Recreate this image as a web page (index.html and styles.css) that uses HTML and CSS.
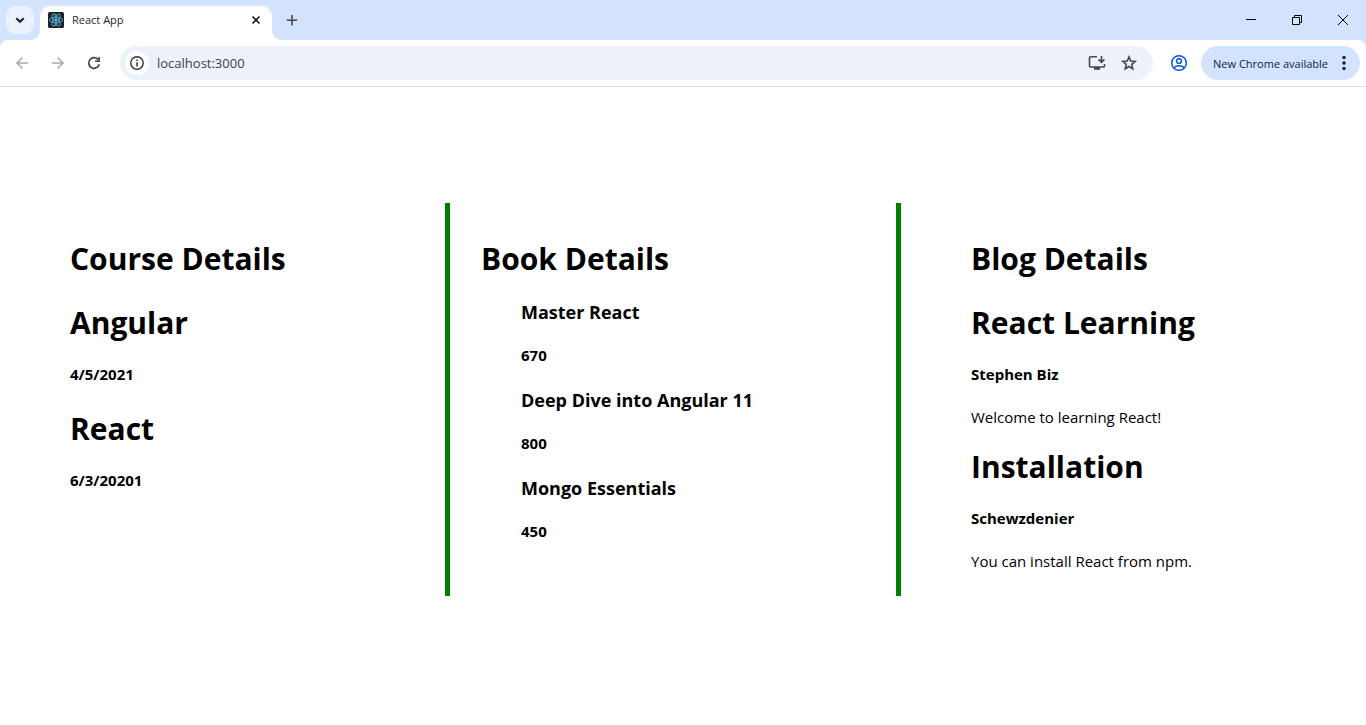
FILE: index.html
```html
<!DOCTYPE html>
<html lang="en">
<head>
<meta charset="utf-8">
<title>React App</title>
<link rel="stylesheet" href="styles.css">
</head>
<body>
<header class="browser">
  <div class="tabstrip">
    <button class="tab-search" aria-label="Search tabs">
      <svg width="16" height="16" viewBox="0 0 16 16"><path d="M4.3 6.2 8 9.8l3.700-3.600" fill="none" stroke="#1f1f1f" stroke-width="2"/></svg>
    </button>
    <div class="tab">
      <svg class="favicon" width="16" height="16" viewBox="0 0 16 16">
        <rect width="16" height="16" rx="1.500" fill="#20232a"/>
        <g fill="none" stroke="#4fb3cf" stroke-width="0.900">
          <ellipse cx="8" cy="8" rx="6.600" ry="2.600"/>
          <ellipse cx="8" cy="8" rx="6.600" ry="2.600" transform="rotate(60 8 8)"/>
          <ellipse cx="8" cy="8" rx="6.600" ry="2.600" transform="rotate(120 8 8)"/>
        </g>
        <circle cx="8" cy="8" r="1.400" fill="#61dafb"/>
      </svg>
      <span class="tab-title">React App</span>
      <button class="icon-button tab-close" aria-label="Close tab">
        <svg width="16" height="16" viewBox="0 0 16 16"><path d="m4.500 4.500 7 7m0-7-7 7" stroke="#1f1f1f" stroke-width="1.700"/></svg>
      </button>
    </div>
    <button class="icon-button new-tab" aria-label="New tab">
      <svg width="16" height="16" viewBox="0 0 16 16"><path d="M8 3v10.500M2.800 8.200h10.500" stroke="#474747" stroke-width="1.600"/></svg>
    </button>
    <div class="window-controls">
      <button class="window-button" aria-label="Minimize"><svg width="12" height="12" viewBox="0 0 12 12"><path d="M1 5.500h10" stroke="#000"/></svg></button>
      <button class="window-button" aria-label="Restore"><svg width="12" height="12" viewBox="0 0 12 12"><path d="M1.500 3.500h7v7h-7zM3.500 3.500v-2h7v7h-2" fill="none" stroke="#000"/></svg></button>
      <button class="window-button" aria-label="Close"><svg width="12" height="12" viewBox="0 0 12 12"><path d="m1 1 10 10m0-10L1 11" stroke="#000"/></svg></button>
    </div>
  </div>
  <div class="toolbar">
    <button class="icon-button nav" aria-label="Back" disabled><svg width="16" height="16" viewBox="0 0 16 16"><path d="M14 8H3m5.500-5.500L3 8l5.500 5.500" fill="none" stroke="#ababab" stroke-width="1.500"/></svg></button>
    <button class="icon-button nav" aria-label="Forward" disabled><svg width="16" height="16" viewBox="0 0 16 16"><path d="M2 8h11M7.500 2.500 13 8l-5.500 5.500" fill="none" stroke="#ababab" stroke-width="1.500"/></svg></button>
    <button class="icon-button nav" aria-label="Reload"><svg width="16" height="16" viewBox="0 0 16 16"><path d="M13.200 9.200A5.300 5.300 0 1 1 12.400 5" fill="none" stroke="#474747" stroke-width="1.700"/><path d="M14 2V7H9V5.400h3.400V2z" fill="#474747"/></svg></button>
    <div class="omnibox">
      <button class="site-info" aria-label="Site information"><svg width="16" height="16" viewBox="0 0 16 16"><circle cx="8" cy="8" r="6.200" fill="none" stroke="#333" stroke-width="1.400"/><path d="M8 7.200v4.200M8 4.400v1.500" stroke="#333" stroke-width="1.500"/></svg></button>
      <input class="address" type="text" value="localhost:3000" aria-label="Address">
      <button class="icon-button omni-icon" aria-label="Install app"><svg width="18" height="18" viewBox="0 0 18 18"><path d="M9 2.800H2.500a1 1 0 0 0-1 1V12a1 1 0 0 0 1 1h13a1 1 0 0 0 1-1v-2" fill="none" stroke="#474747" stroke-width="1.600"/><path d="M6 13h6v2.800H6z" fill="#474747"/><path d="M13.500 2v6M10.600 5.400l2.900 2.900 2.900-2.900" fill="none" stroke="#474747" stroke-width="1.600"/></svg></button>
      <button class="icon-button omni-icon" aria-label="Bookmark this tab"><svg width="18" height="18" viewBox="0 0 18 18"><path d="m9 2.800 1.700 4.200 4.500.400-3.400 3 1 4.400L9 12.500l-3.800 2.300 1-4.400-3.400-3 4.500-.400z" fill="none" stroke="#474747" stroke-width="1.600"/></svg></button>
    </div>
    <button class="icon-button profile" aria-label="Profile"><svg width="18" height="18" viewBox="0 0 18 18"><g fill="none" stroke="#0b57d0" stroke-width="1.500"><circle cx="9" cy="9" r="7.300"/><circle cx="9" cy="7.100" r="2.400"/><path d="M3.700 13.900c2.900-2.900 7.700-2.900 10.600 0"/></g></svg></button>
    <button class="update">
      <span>New Chrome available</span>
      <svg width="4" height="16" viewBox="0 0 4 16" fill="#041e49"><circle cx="2" cy="2.500" r="1.700"/><circle cx="2" cy="8" r="1.700"/><circle cx="2" cy="13.500" r="1.700"/></svg>
    </button>
  </div>
</header>
<main class="columns">
  <section class="column column-courses">
    <h1>Course Details</h1>
    <h1>Angular</h1>
    <h4>4/5/2021</h4>
    <h1>React</h1>
    <h4>6/3/20201</h4>
  </section>
  <section class="column column-books">
    <h1>Book Details</h1>
    <div class="book-list">
      <h3>Master React</h3>
      <h4>670</h4>
      <h3>Deep Dive into Angular 11</h3>
      <h4>800</h4>
      <h3>Mongo Essentials</h3>
      <h4>450</h4>
    </div>
  </section>
  <section class="column column-blogs">
    <h1>Blog Details</h1>
    <h1>React Learning</h1>
    <h4>Stephen Biz</h4>
    <p>Welcome to learning React!</p>
    <h1>Installation</h1>
    <h4>Schewzdenier</h4>
    <p>You can install React from npm.</p>
  </section>
</main>
</body>
</html>
```
FILE: styles.css
```css
* { box-sizing: border-box; }

body {
  margin: 0;
  background: #fff;
  color: #000;
  font-family: "Segoe UI", "Open Sans", sans-serif;
}

button, input {
  margin: 0;
  padding: 0;
  border: 0;
  background: none;
  color: inherit;
  font: inherit;
}

svg { display: block; }

.browser { background: #d3e3fd; }

.tabstrip {
  display: flex;
  height: 40px;
  padding-left: 6px;
}

.tab-search {
  display: grid;
  place-items: center;
  width: 28px;
  height: 28px;
  margin: 6px 6px 0 0;
  border-radius: 10px;
  background: #ebf1fd;
}

.tab {
  position: relative;
  display: flex;
  align-items: center;
  gap: 8px;
  width: 232px;
  height: 34px;
  margin-top: 6px;
  padding: 0 8px 6px;
  border-radius: 10px 10px 0 0;
  background: #fff;
}

.tab::before, .tab::after {
  content: "";
  position: absolute;
  bottom: 0;
  width: 10px;
  height: 10px;
}

.tab::before {
  right: 100%;
  background: radial-gradient(circle at 0 0, transparent 10px, #fff 10px);
}

.tab::after {
  left: 100%;
  background: radial-gradient(circle at 100% 0, transparent 10px, #fff 10px);
}

.tab-title {
  flex: 1;
  color: #1f1f1f;
  font-size: 11px;
  line-height: 16px;
}

.icon-button {
  display: grid;
  flex: none;
  place-items: center;
}

.new-tab { width: 40px; }

.window-controls {
  display: flex;
  margin-left: auto;
}

.window-button {
  display: grid;
  place-items: center;
  width: 46px;
}

.toolbar {
  display: flex;
  align-items: center;
  height: 47px;
  padding: 0 6px 0 4px;
  border-bottom: 1px solid #dfe1e5;
  border-radius: 8px 8px 0 0;
  background: #fff;
}

.nav {
  width: 36px;
  height: 34px;
}

.omnibox {
  display: flex;
  flex: 1;
  align-items: center;
  height: 34px;
  margin-left: 8px;
  padding: 0 8px 0 5px;
  border-radius: 17px;
  background: #ecf1fa;
}

.site-info {
  display: grid;
  place-items: center;
  width: 24px;
  height: 24px;
  border-radius: 50%;
  background: #fff;
}

.address {
  flex: 1;
  min-width: 0;
  margin-left: 8px;
  color: #3c3f43;
  font-size: 13px;
  line-height: 20px;
}

.omni-icon { width: 32px; }

.profile {
  width: 36px;
  margin: 0 4px 0 8px;
}

.update {
  display: flex;
  align-items: center;
  gap: 14px;
  height: 34px;
  padding: 0 14px 0 12px;
  border-radius: 17px;
  background: #d3e3fd;
  color: #041e49;
  font-size: 11px;
}

.columns {
  display: grid;
  grid-template-columns: 445fr 451fr 470fr;
  padding-top: 116px;
}

.column { padding: 34px 24px 24px 70px; }

.column-books {
  padding-left: 31px;
  border-left: 5px solid green;
}

.column-blogs { border-left: 5px solid green; }

.book-list { padding-left: 40px; }

h1, h3, h4, p { margin: 0; }

h1 {
  margin-bottom: 20px;
  font-size: 30px;
  line-height: 43px;
}

h1 + h1 { margin-top: 21px; }

h3 {
  margin-bottom: 21px;
  font-size: 18px;
  line-height: 24px;
}

h4 {
  margin-bottom: 22px;
  font-size: 15px;
  line-height: 21px;
}

p {
  margin-bottom: 17px;
  font-size: 15px;
  line-height: 21px;
}

.column p:last-child { margin-bottom: 0; }
```
